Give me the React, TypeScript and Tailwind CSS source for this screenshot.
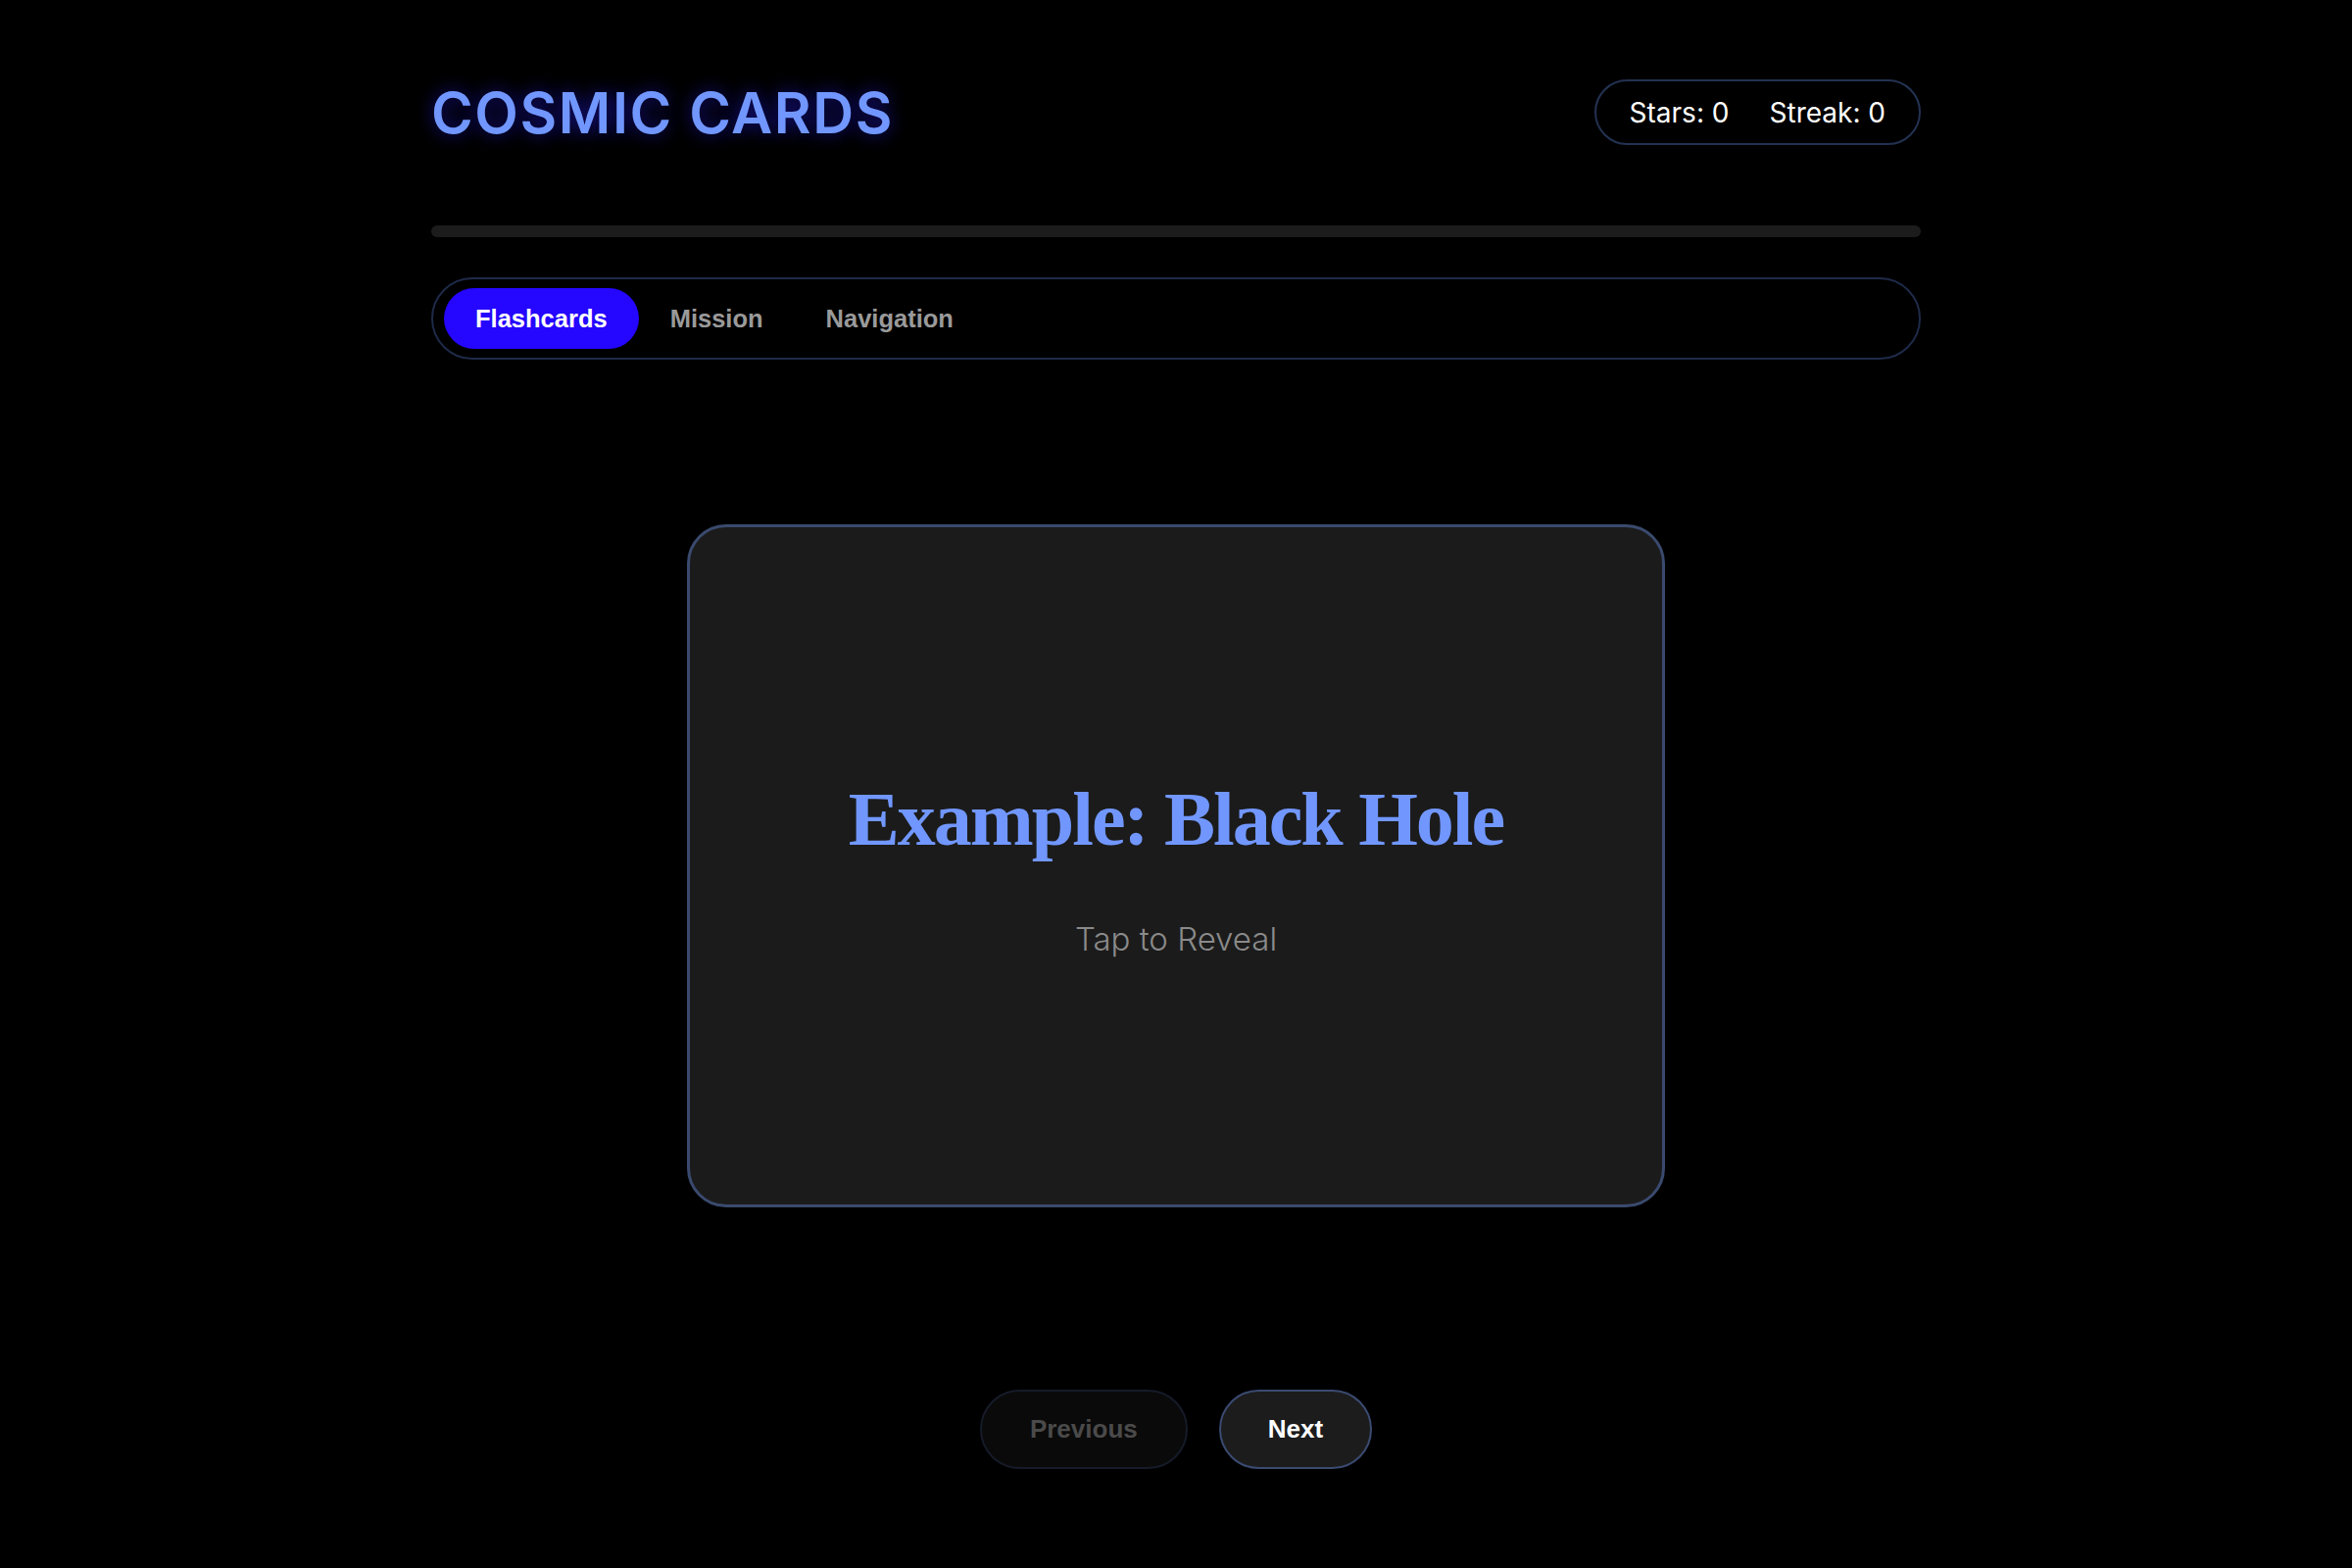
export default function App() {
  const tabs = ["Flashcards", "Mission", "Navigation"];
  const active = "Flashcards";

  return (
    <div className="min-h-[1600px] w-full bg-black text-white">
      <div className="mx-auto w-[1520px] pt-[81px]">
        {/* Header */}
        <header className="flex items-center justify-between">
          <h1
            className="text-[58px] font-semibold leading-none tracking-[1.6px] text-[#7197ff] [text-shadow:0_0_18px_rgba(40,30,255,0.55)]"
            style={{ fontFamily: "Inter, 'Noto Sans', sans-serif" }}
          >
            COSMIC CARDS
          </h1>
          <div
            className="flex h-[67px] items-center gap-[41px] rounded-full border-2 border-[#233252] px-[34px] text-[28px] text-white"
            style={{ fontFamily: "Inter, 'Noto Sans', sans-serif" }}
          >
            <span>Stars: 0</span>
            <span>Streak: 0</span>
          </div>
        </header>

        {/* Progress */}
        <div className="mt-[82px] h-[12px] w-full rounded-full bg-[#1c1c1c]" />

        {/* Tabs */}
        <nav
          className="mt-[41px] flex h-[84px] items-center rounded-full border-2 border-[#1e2a48] px-[11px]"
          style={{ fontFamily: "'Liberation Sans', Arial, sans-serif" }}
        >
          {tabs.map((tab) => (
            <button
              key={tab}
              className={
                tab === active
                  ? "h-[62px] rounded-full bg-[#2506fe] px-[32px] text-[25.5px] font-bold text-white"
                  : "h-[62px] rounded-full px-[32px] text-[25.5px] font-bold text-[#9a9a9a]"
              }
            >
              {tab}
            </button>
          ))}
        </nav>

        {/* Card */}
        <div className="mt-[168px] flex justify-center">
          <div className="flex h-[697px] w-[998px] flex-col items-center justify-center rounded-[40px] border-[3px] border-[#3a4a6e] bg-[#1b1b1b] pt-[4px]">
            <h2
              className="text-[78px] font-bold leading-none tracking-[-2px] text-[#7197ff]"
              style={{ fontFamily: "'Liberation Serif', 'Times New Roman', serif" }}
            >
              Example: Black Hole
            </h2>
            <p
              className="mt-[67px] text-[33px] font-light leading-none text-[#8a8a8a]"
              style={{ fontFamily: "Inter, 'Noto Sans', sans-serif" }}
            >
              Tap to Reveal
            </p>
          </div>
        </div>

        {/* Controls */}
        <div
          className="mt-[186px] flex justify-center gap-[32px]"
          style={{ fontFamily: "'Liberation Sans', Arial, sans-serif" }}
        >
          <button className="h-[81px] rounded-full border-2 border-[#161b29] bg-[#0a0a0a] px-[49px] text-[26px] font-bold text-[#4a4a4a]">
            Previous
          </button>
          <button className="h-[81px] rounded-full border-2 border-[#3a4a70] bg-[#1c1c1c] px-[48px] text-[26px] font-bold text-white">
            Next
          </button>
        </div>
      </div>
    </div>
  );
}
